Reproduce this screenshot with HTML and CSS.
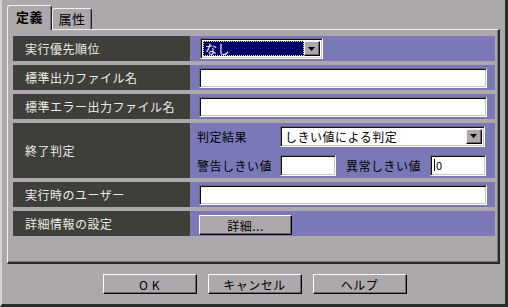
FILE: index.html
```html
<html>
<head>
  <meta charset="UTF-8">
  <title>ジョブ定義</title>
  <link rel="stylesheet" href="styles.css">
</head>
<body>

<div class="dialog">
  <div class="tabs">
    <div class="tab active">定義</div>
    <div class="tab">属性</div>
  </div>

  <div class="panel">
    <div class="row">
      <div class="label">実行優先順位</div>
      <div class="value">
        <div class="select prio">
          <span class="current focus">なし</span>
          <span class="drop"><svg width="8" height="4" viewBox="0 0 8 4"><polygon points="0,0 7,0 3.5,4" fill="#000"/></svg></span>
        </div>
      </div>
    </div>

    <div class="row">
      <div class="label">標準出力ファイル名</div>
      <div class="value"><div class="field wide"></div></div>
    </div>

    <div class="row">
      <div class="label">標準エラー出力ファイル名</div>
      <div class="value"><div class="field wide"></div></div>
    </div>

    <div class="row tall">
      <div class="label">終了判定</div>
      <div class="value sub">
        <div class="subrow">
          <span class="sublabel">判定結果</span>
          <div class="select judge">
            <span class="current">しきい値による判定</span>
            <span class="drop"><svg width="8" height="4" viewBox="0 0 8 4"><polygon points="0,0 7,0 3.5,4" fill="#000"/></svg></span>
          </div>
        </div>
        <div class="subrow">
          <span class="sublabel">警告しきい値</span>
          <div class="field small"></div>
          <span class="sublabel second">異常しきい値</span>
          <div class="field small"><span class="caret"></span>0</div>
        </div>
      </div>
    </div>

    <div class="row">
      <div class="label">実行時のユーザー</div>
      <div class="value"><div class="field wide"></div></div>
    </div>

    <div class="row">
      <div class="label">詳細情報の設定</div>
      <div class="value"><button class="btn detail">詳細...</button></div>
    </div>
  </div>

  <div class="buttons">
    <button class="btn">O K</button>
    <button class="btn">キャンセル</button>
    <button class="btn">ヘルプ</button>
  </div>
</div>

</body>
</html>
```

FILE: styles.css
```css
body { margin:0; padding:0; font: 12px "Noto Sans CJK JP", "Liberation Sans", sans-serif; letter-spacing: 0.5px; }

.dialog {
  width: 508px;
  height: 307px;
  box-sizing: border-box;
  background: #aca8ac;
  border-left: 2px solid #d4d0d4;
  border-right: 3px solid #2c2c2c;
  border-bottom: 3px solid #2c2c2c;
  padding: 5px 0 0 5px;
}

/* tabs */
.tabs { display:flex; align-items:flex-end; height:24px; position: relative; z-index: 1; }
.tab {
  box-sizing: border-box;
  width: 40px;
  height: 21px;
  line-height: 20px;
  text-align: center;
  color: #000;
  background: #aca8ac;
  border: 1px solid;
  border-color: #f4f0f4 #222 transparent #f4f0f4;
  border-bottom: none;
  border-radius: 3px 3px 0 0;
  box-shadow: inset -1px 0 #7a767a;
  font-size: 13px;
}
.tab.active {
  width: 45px;
  height: 25px;
  margin-bottom: -1px;
  line-height: 22px;
  font-weight: bold;
}

/* panel */
.panel {
  box-sizing: border-box;
  width: 493px;
  height: 235px;
  border-top: 1px solid #f4f0f4;
  border-left: 1px solid #f4f0f4;
  border-right: 2px solid #2a2a2a;
  border-bottom: 2px solid #2a2a2a;
  box-shadow: inset -1px -1px #7a767a;
  padding: 6px 3px 0 5px;
  display: flex;
  flex-direction: column;
  gap: 4px;
}

.row { display:grid; grid-template-columns: 177px 1fr; height:25px; }
.row.tall { height:55px; }
.label {
  background: #3e3f3b;
  color: #ecebe6;
  padding-left: 12px;
  display: flex;
  align-items: center;
}
.value {
  background: #7b78b8;
  padding-left: 9px;
  display: flex;
  align-items: center;
}

.value.sub {
  padding-left: 7px;
  flex-direction: column;
  align-items: stretch;
  justify-content: center;
  gap: 8px;
}
.subrow { display:flex; align-items:center; height:21px; color:#000; }
.sublabel { width: 83px; }
.sublabel.second { width: 84px; margin-left: 10px; }

/* inputs */
.field {
  box-sizing: border-box;
  height: 20px;
  background: #fff;
  border: 1px solid;
  border-color: #6b696b #fff #fff #6b696b;
  box-shadow: inset 1px 1px #111, inset -1px -1px #c8c4c8;
  display: flex;
  align-items: center;
  padding-left: 3px;
  font-size: 11px;
}
.field.wide { width: 288px; }
.field.small { width: 56px; height: 21px; }
.caret { width:1px; height:12px; background:#000; margin-right:1px; }

.select {
  box-sizing: border-box;
  height: 21px;
  display: flex;
  background: #fff;
  border: 1px solid;
  border-color: #6b696b #fff #fff #6b696b;
  box-shadow: inset 1px 1px #111, inset -1px -1px #c8c4c8;
  padding: 2px;
}
.select.prio { width: 123px; margin-left: 1px; }
.select.judge { width: 205px; }
.current { flex:1; display:flex; align-items:center; padding-left:2px; color:#000; }
.current.focus {
  background: #000066;
  color: #fff;
  border: 1px dotted #e8e4a0;
  padding-left: 1px;
}
.drop {
  box-sizing: border-box;
  width: 16px;
  background: #aca8ac;
  border: 1px solid;
  border-color: #f4f0f4 #000 #000 #f4f0f4;
  box-shadow: inset -1px -1px #6b696b;
  display: flex;
  align-items: center;
  justify-content: center;
}

/* buttons */
.btn {
  box-sizing: border-box;
  width: 94px;
  height: 20px;
  padding: 0;
  font: inherit;
  letter-spacing: 0.5px;
  color: #000;
  background: #aca8ac;
  border: 1px solid;
  border-color: #fff #000 #000 #fff;
  box-shadow: inset -1px -1px #6b696b;
}
.btn.detail { width: 93px; margin-top: 3px; }

.buttons {
  display: flex;
  justify-content: center;
  gap: 11px;
  margin-top: 10px;
  padding-right: 3px;
}
```
